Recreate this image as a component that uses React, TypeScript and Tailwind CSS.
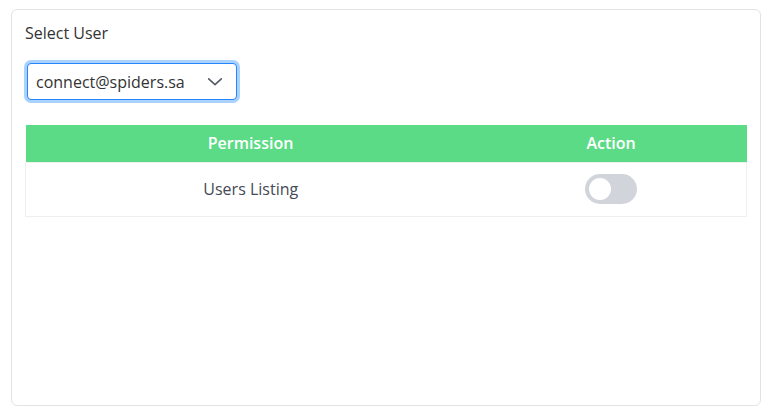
import { useState } from "react";

const App = () => {
  const [enabled, setEnabled] = useState(false);

  return (
    <div
      className="min-h-screen bg-white pt-[9px] pl-[11px] pr-[17px] pb-[8px]"
      style={{ fontFamily: '"Open Sans", sans-serif' }}
    >
      <div className="h-[397px] rounded-md border border-[#e3e3e3] bg-white pt-[13px] px-[13px]">
        <label className="block text-[16px] leading-[20px] text-[#333333]">
          Select User
        </label>
        <div className="mt-[17px] -ml-[1px] w-[216px] rounded-[7px] p-[3px] bg-[#a9d2fc]">
          <div className="flex h-[37px] items-center justify-between rounded-[4px] border border-[#2684ff] bg-white pl-[8px] pr-[12px]">
            <span className="text-[16px] text-[#333333]">connect@spiders.sa</span>
            <svg width="18" height="18" viewBox="0 0 20 20" className="text-[#555b66]">
              <path
                d="M3 6.5 L10 13 L17 6.5"
                fill="none"
                stroke="currentColor"
                strokeWidth="1.8"
                strokeLinecap="round"
                strokeLinejoin="round"
              />
            </svg>
          </div>
        </div>
        <table className="mt-[22px] w-[722px] border-collapse">
          <thead>
            <tr className="bg-[#5cdb86] text-white">
              <th className="w-[450px] h-[37px] text-[16px] font-semibold">Permission</th>
              <th className="h-[37px] text-[16px] font-semibold">Action</th>
            </tr>
          </thead>
          <tbody>
            <tr className="border border-[#efefef]">
              <td className="h-[54px] text-center text-[16px] text-[#444a55]">Users Listing</td>
              <td className="h-[54px] text-center">
                <button
                  onClick={() => setEnabled(!enabled)}
                  className="inline-flex h-[30px] w-[52px] items-center rounded-full bg-[#d1d5db] px-[4px] align-middle"
                >
                  <span className="h-[22px] w-[22px] rounded-full bg-white" />
                </button>
              </td>
            </tr>
          </tbody>
        </table>
      </div>
    </div>
  );
};

export default App;
